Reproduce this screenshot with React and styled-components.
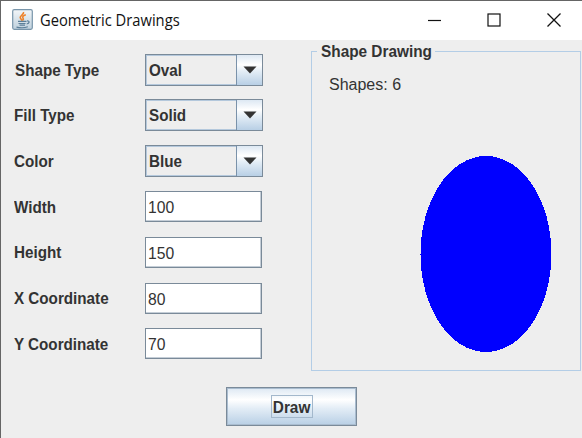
import React from "react";
import styled, { createGlobalStyle } from "styled-components";

const Global = createGlobalStyle`
  * { box-sizing: border-box; }
  body { margin: 0; background: #eee; overflow: hidden; }
`;

const Window = styled.div`
  width: 582px;
  height: 438px;
  display: flex;
  flex-direction: column;
  background: #eeeeee;
  border-top: 1px solid #656565;
  border-left: 1px solid #656565;
  color: #333;
  font: 16px "Liberation Sans", Arial, sans-serif;
`;

const TitleBar = styled.header`
  height: 39px;
  flex: none;
  display: flex;
  align-items: center;
  background: #fff;
  padding: 0 21px 2px 11px;
`;

const Title = styled.h1`
  flex: 1;
  margin: 0 0 0 7px;
  color: #111;
  font: 400 15.5px/20px "Open Sans", "Noto Sans", sans-serif;
  white-space: nowrap;
`;

const Fit = styled.span`
  display: inline-block;
  white-space: nowrap;
  transform: scaleX(${(p) => p.$scale});
  transform-origin: ${(p) => p.$origin || "left"} center;
`;

const WindowControls = styled.div`
  display: flex;
  gap: 46px;
  color: #111;
  svg { display: block; }
`;

const Content = styled.main`
  height: 332px;
  flex: none;
  display: grid;
  grid-template-columns: 310px 270px;
`;

const Form = styled.form`
  display: grid;
  grid-template-columns: 131px 118px;
  grid-auto-rows: 45.67px;
  padding: 6.9px 0 0 13px;
  align-items: center;
`;

const Label = styled.label`
  font-weight: 700;
  line-height: 20px;
  padding: 2px 0 0 ${(p) => p.$inset || 0}px;
  white-space: nowrap;
`;

const Combo = styled.div`
  width: 118px;
  height: 32px;
  display: flex;
  border: 1px solid #7a8a99;
  box-shadow: inset 0 0 0 1px #b4c8dc;
  font-weight: 700;
`;

const ComboValue = styled.span`
  flex: 1;
  padding-left: 3px;
  line-height: 31px;
`;

const ComboArrow = styled.span`
  width: 26px;
  display: flex;
  align-items: center;
  justify-content: center;
  border-left: 1.5px solid #7a92aa;
  background: linear-gradient(#dde8f3, #fff 32%, #e3edf6 55%, #b8cfe5);
`;

const Field = styled.div`
  width: 117px;
  height: 31px;
  padding-left: 2px;
  border: 1px solid #7a8a99;
  box-shadow: inset -1px -1px 0 #c5ced7;
  background: #fff;
  line-height: 31px;
`;

const Group = styled.fieldset`
  height: 329px;
  min-width: 0;
  margin: 2px 0 0;
  padding: 0;
  border: 1px solid #b3cde6;
`;

const Legend = styled.legend`
  height: 19px;
  margin-left: 5px;
  padding: 0 0 0 4px;
  width: 118px;
  font-weight: 700;
  line-height: 20px;
`;

const Canvas = styled.div`
  display: flex;
  flex-direction: column;
  padding: 14px 0 0 17px;
`;

const Count = styled.div`
  height: 20px;
  line-height: 20px;
`;

const Oval = styled.svg`
  display: block;
  width: 132px;
  height: 196px;
  margin: 61px 0 0 91px;
`;

const Footer = styled.footer`
  display: flex;
  padding: 15px 0 0 225px;
`;

const DrawButton = styled.button`
  width: 131px;
  height: 39px;
  display: flex;
  align-items: center;
  justify-content: center;
  padding: 0;
  border: 1px solid #7a8a99;
  box-shadow: inset 0 0 0 1px #a9bccf;
  background: linear-gradient(#dde8f3, #fff 32%, #e3edf6 55%, #b8cfe5);
  color: #333;
  font: 700 16px "Liberation Sans", Arial, sans-serif;
`;

const FocusRing = styled.span`
  width: 42px;
  height: 23px;
  border: 1px solid #a3b8cc;
  line-height: 23px;
`;

function JavaIcon() {
  return (
    <svg width="21" height="21" viewBox="0 0 21 21" fill="none">
      <defs>
        <linearGradient id="tile" x2="0" y2="1">
          <stop stopColor="#f3f6f8" />
          <stop offset="1" stopColor="#bed0dd" />
        </linearGradient>
      </defs>
      <rect x=".7" y=".7" width="19.6" height="19.6" rx="1.5" fill="url(#tile)" stroke="#7895aa" strokeWidth="1.2" />
      <path d="M11.5 3c1 2.2-3.5 3.5-3.3 5.5.1 1.2 1.6 2.2 2 3.2M13.8 5.8c-2.5.8-3.7 2-2.8 3.2.8 1 .5 1.7-.4 2.5" stroke="#ee8128" strokeWidth="1.6" />
      <path d="M6 12.3h8.5M6.5 14.5h7M7.5 16.2h5.5M4.5 18.1c3 .7 8.5.7 11.3-.3M15 12c3-.4 2.700 2.500-.3 3" stroke="#5c7f99" strokeWidth="1.2" />
    </svg>
  );
}

function Arrow() {
  return (
    <svg width="14" height="8" viewBox="0 0 14 8"><path d="M.5.5h13L7 7.5z" fill="#333" /></svg>
  );
}

const rows = [
  { label: "Shape Type", value: "Oval", combo: true, inset: 1 },
  { label: "Fill Type", value: "Solid", combo: true },
  { label: "Color", value: "Blue", combo: true },
  { label: "Width", value: "100" },
  { label: "Height", value: "150" },
  { label: "X Coordinate", value: "80" },
  { label: "Y Coordinate", value: "70" },
];

export default function App() {
  return (
    <>
      <Global />
      <Window>
        <TitleBar>
          <JavaIcon />
          <Title><Fit $scale={0.95}>Geometric Drawings</Fit></Title>
          <WindowControls>
            <svg width="13" height="14" viewBox="0 0 13 14"><path d="M0 7.5h13" stroke="currentColor" strokeWidth="1.2" /></svg>
            <svg width="14" height="14" viewBox="0 0 14 14"><rect x="1" y="1" width="12" height="12" fill="none" stroke="currentColor" strokeWidth="1.2" /></svg>
            <svg width="14" height="14" viewBox="0 0 14 14"><path d="M.5.5l13 13M13.5.5l-13 13" stroke="currentColor" strokeWidth="1.3" /></svg>
          </WindowControls>
        </TitleBar>
        <Content>
          <Form>
            {rows.map((r) => (
              <React.Fragment key={r.label}>
                <Label $inset={r.inset}><Fit $scale={0.95}>{r.label}</Fit></Label>
                {r.combo ? (
                  <Combo>
                    <ComboValue><Fit $scale={0.95}>{r.value}</Fit></ComboValue>
                    <ComboArrow><Arrow /></ComboArrow>
                  </Combo>
                ) : (
                  <Field><Fit $scale={0.98}>{r.value}</Fit></Field>
                )}
              </React.Fragment>
            ))}
          </Form>
          <Group>
            <Legend><Fit $scale={0.96}>Shape Drawing</Fit></Legend>
            <Canvas>
              <Count><Fit $scale={1}>Shapes: 6</Fit></Count>
              <Oval viewBox="0 0 132 196" shapeRendering="crispEdges">
                <ellipse cx="66" cy="98" rx="65.5" ry="98" fill="#00f" />
                <path d="M0 97.5h3v1H0z" fill="#00f" />
              </Oval>
            </Canvas>
          </Group>
        </Content>
        <Footer>
          <DrawButton><FocusRing><Fit $scale={0.96} $origin="center">Draw</Fit></FocusRing></DrawButton>
        </Footer>
      </Window>
    </>
  );
}
